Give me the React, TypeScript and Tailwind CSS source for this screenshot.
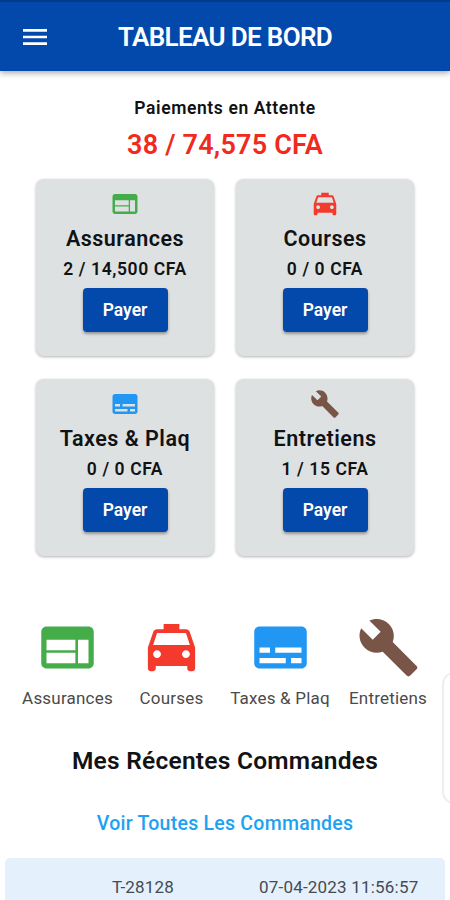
import type { IconType } from "react-icons";
import { MdBuild, MdLocalTaxi, MdMenu, MdSubtitles, MdWeb } from "react-icons/md";

interface Service {
  name: string;
  amount: string;
  icon: IconType;
  color: string;
  column: string;
}

const services: Service[] = [
  { name: "Assurances", amount: "2 / 14,500 CFA", icon: MdWeb, color: "text-[#44ad49]", column: "w-[119px]" },
  { name: "Courses", amount: "0 / 0 CFA", icon: MdLocalTaxi, color: "text-[#f33a2c]", column: "w-[89px]" },
  { name: "Taxes & Plaq", amount: "0 / 0 CFA", icon: MdSubtitles, color: "text-[#2196f3]", column: "w-[128px]" },
  { name: "Entretiens", amount: "1 / 15 CFA", icon: MdBuild, color: "text-[#795548]", column: "w-[88px]" },
];

function PaymentCard({ service }: { service: Service }) {
  const Icon = service.icon;
  return (
    <div className="flex h-[177px] flex-col items-center rounded-lg bg-[#dee1e2] pt-[10px] shadow-[0_1px_3px_rgba(0,0,0,0.3)]">
      <Icon className={`size-[30px] shrink-0 ${service.color}`} />
      <h2 className="text-[21.5px] leading-[39px] font-semibold tracking-[0.5px] whitespace-nowrap">{service.name}</h2>
      <p className="text-[17.5px] leading-[22px] font-semibold tracking-[0.6px] whitespace-nowrap">{service.amount}</p>
      <button className="mt-2 h-[44px] w-[85px] rounded bg-[#0349ab] text-[17.5px] font-semibold text-white shadow-[0_2px_3px_rgba(0,0,0,0.35)]">
        Payer
      </button>
    </div>
  );
}

export default function App() {
  return (
    <div className="relative h-[900px] w-[450px] overflow-hidden bg-white font-['Roboto',sans-serif] text-[#111214]">
      <header className="flex h-[71px] items-center border-t-2 border-[#003a89] bg-[#0349ab] text-white shadow-[0_2px_6px_rgba(0,0,0,0.35)]">
        <MdMenu className="ml-[19px] size-8" />
        <h1 className="mt-[2px] ml-[67px] text-[26px] font-semibold tracking-[-0.65px] whitespace-nowrap">TABLEAU DE BORD</h1>
      </header>

      <section className="pt-[24px] text-center">
        <p className="text-[17.5px] leading-[26px] font-semibold tracking-[0.6px]">Paiements en Attente</p>
        <p className="pt-px text-[27px] leading-[46px] font-semibold tracking-[0.2px] text-[#f02a1d]">38 / 74,575 CFA</p>
      </section>

      <section className="mt-[11px] grid grid-cols-2 gap-x-[22px] gap-y-[23px] px-[36px]">
        {services.map((service) => (
          <PaymentCard key={service.name} service={service} />
        ))}
      </section>

      <nav className="mt-[60px] flex pl-2">
        {services.map(({ name, icon: Icon, color, column }) => (
          <div key={name} className={`flex shrink-0 flex-col items-center ${column}`}>
            <Icon className={`size-[63px] ${color}`} />
            <span className="mt-[7px] text-[17px] leading-6 tracking-[0.2px] whitespace-nowrap text-[#4a4a4a]">{name}</span>
          </div>
        ))}
      </nav>

      <h2 className="mt-[35px] text-center text-[24.5px] leading-8 font-semibold tracking-[0.25px]">
        Mes Récentes Commandes
      </h2>
      <p className="mt-[35px] text-center text-[19.5px] leading-6 font-medium tracking-[0.25px] text-[#1da1f2]">
        Voir Toutes Les Commandes
      </p>

      <div className="mx-[5px] mt-[22px] flex h-[60px] rounded-t-[5px] bg-[#e5f0fd] pt-[17px] text-[17px] leading-6 tracking-[0.2px] text-[#444b52]">
        <span className="ml-[107px] w-[147px]">T-28128</span>
        <span className="whitespace-nowrap">07-04-2023 11:56:57</span>
      </div>

      {/* edge panel handle */}
      <div className="absolute top-[672px] -right-4 h-[132px] w-6 rounded-[14px] border-2 border-[#eeeeee] bg-white" />
    </div>
  );
}
